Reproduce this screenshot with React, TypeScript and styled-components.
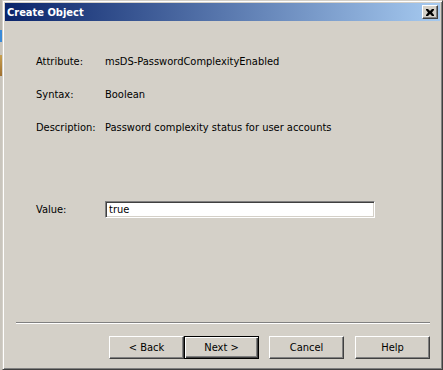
import styled, { createGlobalStyle } from 'styled-components'

const GlobalStyle = createGlobalStyle`
  html, body {
    margin: 0;
    padding: 0;
    background: #c9c5bd;
  }
  body {
    font-family: "DejaVu Sans Condensed", "Liberation Sans", sans-serif;
    font-size: 11px;
    color: #000;
  }
`

const Desktop = styled.div`
  display: flex;
  width: 443px;
  height: 370px;
  overflow: hidden;
`

const DesktopStrip = styled.div`
  width: 2px;
  background: linear-gradient(
    #b9b5ad 0px, #b9b5ad 30px,
    #3a8ad8 30px, #3a8ad8 42px,
    #c9c5bd 42px, #c9c5bd 55px,
    #c8a050 55px, #a07030 76px,
    #c9c5bd 76px
  );
`

const Window = styled.div`
  flex: 1;
  display: flex;
  flex-direction: column;
  background: #d4d0c8;
  border-top: 1px solid #d4d0c8;
  border-left: 1px solid #d4d0c8;
  border-right: 1px solid #404040;
  border-bottom: 1px solid #404040;
  box-shadow: inset 1px 1px 0 #fff, inset -1px -1px 0 #808080;
  padding: 2px;
`

const TitleBar = styled.div`
  height: 18px;
  display: flex;
  align-items: center;
  justify-content: space-between;
  padding: 0 2px;
  background: linear-gradient(to right, #0a246a, #a6caf0);
`

const Title = styled.span`
  color: #fff;
  font-weight: bold;
  font-size: 11px;
`

const CloseButton = styled.div`
  width: 14px;
  height: 12px;
  display: flex;
  align-items: center;
  justify-content: center;
  background: #d4d0c8;
  border-top: 1px solid #fff;
  border-left: 1px solid #fff;
  border-right: 1px solid #404040;
  border-bottom: 1px solid #404040;
  box-shadow: inset -1px -1px 0 #808080;
`

const Content = styled.div`
  flex: 1;
  display: flex;
  flex-direction: column;
  padding: 34px 10px 8px 11px;
`

const Fields = styled.div`
  display: grid;
  grid-template-columns: 69px 1fr;
  row-gap: 20px;
  padding-left: 20px;
  line-height: 13px;
`

const ValueRow = styled.div`
  display: grid;
  grid-template-columns: 69px 270px;
  align-items: center;
  padding-left: 20px;
  margin-top: 67px;
`

const TextBox = styled.div`
  height: 15px;
  padding: 0 3px;
  display: flex;
  align-items: center;
  background: #fff;
  border-top: 1px solid #808080;
  border-left: 1px solid #808080;
  border-right: 1px solid #fff;
  border-bottom: 1px solid #fff;
  box-shadow: inset 1px 1px 0 #404040, inset -1px -1px 0 #d4d0c8;
`

const Spacer = styled.div`
  flex: 1;
`

const Separator = styled.div`
  height: 0;
  border-top: 1px solid #808080;
  border-bottom: 1px solid #fff;
  margin-bottom: 12px;
`

const ButtonRow = styled.div`
  display: flex;
  justify-content: flex-end;
  gap: 0;
`

const Button = styled.div<{ $default?: boolean; $gap?: number }>`
  width: 75px;
  height: 23px;
  margin-left: ${({ $gap }) => $gap ?? 0}px;
  box-sizing: border-box;
  display: flex;
  align-items: center;
  justify-content: center;
  background: #d4d0c8;
  ${({ $default }) =>
    $default
      ? `
    border: 1px solid #000;
    box-shadow: inset 1px 1px 0 #fff, inset -1px -1px 0 #404040, inset -2px -2px 0 #808080;
  `
      : `
    border-top: 1px solid #fff;
    border-left: 1px solid #fff;
    border-right: 1px solid #404040;
    border-bottom: 1px solid #404040;
    box-shadow: inset -1px -1px 0 #808080;
  `}
`

const CloseIcon = () => (
  <svg width="8" height="7" viewBox="0 0 8 7">
    <path d="M0 0h2l2 2 2-2h2v1L6 3.5 8 6v1H6L4 5 2 7H0V6l2-2.5L0 1z" fill="#000" />
  </svg>
)

const rows = [
  { label: 'Attribute:', value: 'msDS-PasswordComplexityEnabled' },
  { label: 'Syntax:', value: 'Boolean' },
  { label: 'Description:', value: 'Password complexity status for user accounts' }
]

export default function App() {
  return (
    <>
      <GlobalStyle />
      <Desktop>
        <DesktopStrip />
        <Window>
          <TitleBar>
            <Title>Create Object</Title>
            <CloseButton>
              <CloseIcon />
            </CloseButton>
          </TitleBar>
          <Content>
            <Fields>
              {rows.flatMap(row => [
                <span key={row.label}>{row.label}</span>,
                <span key={row.value}>{row.value}</span>
              ])}
            </Fields>
            <ValueRow>
              <span>Value:</span>
              <TextBox>true</TextBox>
            </ValueRow>
            <Spacer />
            <Separator />
            <ButtonRow>
              <Button>&lt; Back</Button>
              <Button $default>Next &gt;</Button>
              <Button $gap={10}>Cancel</Button>
              <Button $gap={11}>Help</Button>
            </ButtonRow>
          </Content>
        </Window>
      </Desktop>
    </>
  )
}
